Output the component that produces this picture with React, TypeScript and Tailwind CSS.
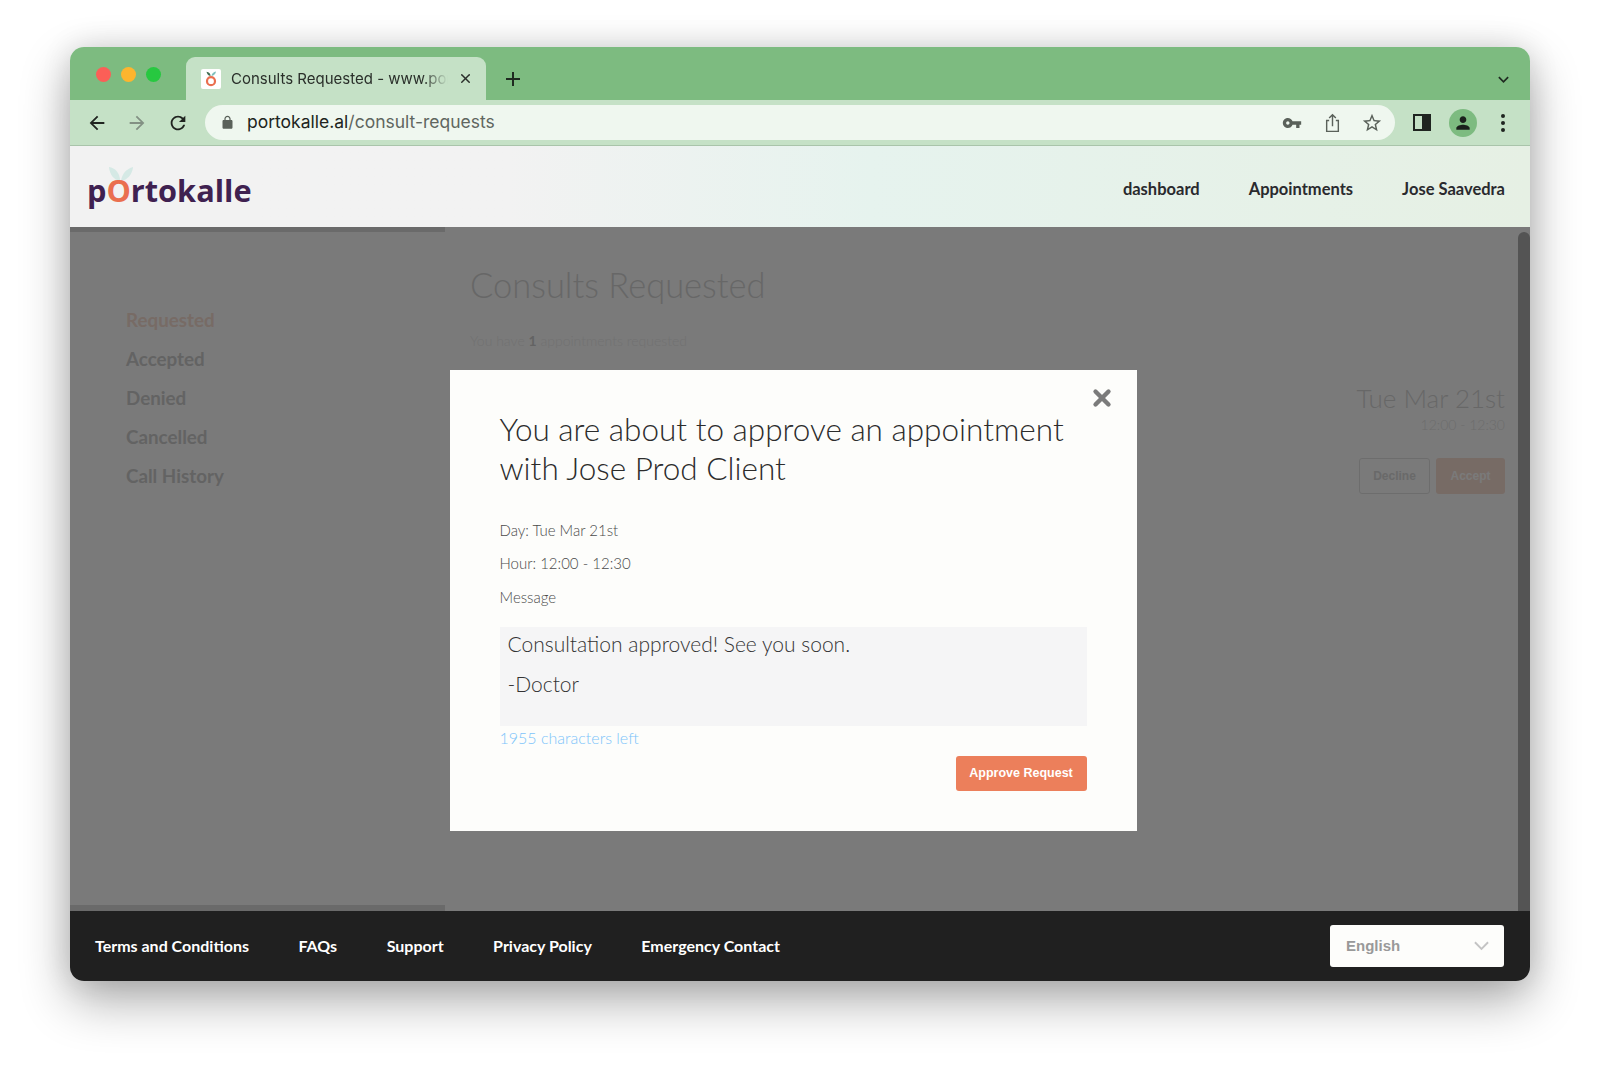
import { X } from "lucide-react";

const raleway = "font-['Lato','Open_Sans',sans-serif]";

function MatIcon({ d, className }: { d: string; className?: string }) {
  return (
    <svg viewBox="0 0 24 24" fill="currentColor" className={className}>
      <path d={d} />
    </svg>
  );
}

function Favicon() {
  return (
    <svg viewBox="0 0 20 20" className="w-[20px] h-[20px] bg-white rounded-[2px]">
      <path d="M9.6 7 C7 6.5 6 5 5.5 2.8 C8 3 9.4 4.6 9.6 7Z" fill="#3f6b4f" />
      <path d="M10.4 7 C10.8 4.5 12.5 3 15 2.6 C14.6 5 13 6.6 10.4 7Z" fill="#7fc0bd" />
      <circle cx="10" cy="12.2" r="4" fill="none" stroke="#ea6f4f" strokeWidth="2.2" />
    </svg>
  );
}

function Logo() {
  return (
    <div className="relative h-[40px] w-[170px] mt-[7px]">
      <svg viewBox="0 0 28 18" className="absolute left-[21px] -top-[5px] w-[26px] h-[17px]">
        <path d="M13 17 C6 16 2 10 1 2 C8 3 13 9 13 17Z" fill="#d5e9e5" />
        <path d="M14 17 C15 9 20 4 27 2 C26 10 21 16 14 17Z" fill="#d5e9e5" />
      </svg>
      <span className="absolute left-0 top-0 font-['Open_Sans',sans-serif] font-bold text-[30.7px] leading-[40px] text-[#3f2150] whitespace-nowrap">
        p<span className="text-[#ea6f4f]">O</span>rtokalle
      </span>
    </div>
  );
}

function BrowserChrome() {
  return (
    <>
      <div className="h-[53px] bg-[#7dbb80] flex items-end pl-[26px] pr-[20px] shrink-0">
        <div className="flex gap-[10px] mb-[18px] mr-[25px] items-center">
          <span className="w-[15px] h-[15px] rounded-full bg-[#fb5f57]" />
          <span className="w-[15px] h-[15px] rounded-full bg-[#fdb52e]" />
          <span className="w-[15px] h-[15px] rounded-full bg-[#27c840]" />
        </div>
        <div className="w-[300px] h-[43px] bg-[#c5e1c6] rounded-t-[9px] flex items-center pl-[15px] pr-[13px] gap-[10px] font-['Inter',sans-serif] text-[15px] text-[#2a2f2a]">
          <Favicon />
          <span className="flex-1 pt-[1px] whitespace-nowrap overflow-hidden [mask-image:linear-gradient(to_right,black_88%,transparent)]">
            Consults Requested - www.portokalle.al
          </span>
          <X size={15} strokeWidth={2.4} />
        </div>
        <svg viewBox="0 0 16 16" className="w-[16px] h-[16px] ml-[19px] mb-[13px] text-[#1f2a20]">
          <path d="M8 1v14M1 8h14" stroke="currentColor" strokeWidth="2" />
        </svg>
        <svg viewBox="0 0 14 14" className="w-[13px] h-[13px] ml-auto mb-[14px] text-[#1f2a20]">
          <path d="M2 4.5l5 5 5-5" fill="none" stroke="currentColor" strokeWidth="1.8" />
        </svg>
      </div>
      <div className="h-[46px] bg-[#c5e1c6] border-b border-[#a9c4aa] flex items-center pl-[16px] pr-[18px] shrink-0">
        <MatIcon d="M20 11H7.83l5.59-5.59L12 4l-8 8 8 8 1.41-1.41L7.83 13H20v-2z" className="w-[22px] h-[22px] text-[#202420]" />
        <MatIcon d="M4 11h12.17l-5.59-5.59L12 4l8 8-8 8-1.41-1.41L16.17 13H4v-2z" className="w-[22px] h-[22px] ml-[18px] text-[#839184]" />
        <MatIcon d="M17.65 6.35C16.2 4.9 14.21 4 12 4c-4.42 0-7.99 3.58-7.99 8s3.57 8 7.99 8c3.73 0 6.84-2.55 7.73-6h-2.08c-.82 2.33-3.04 4-5.65 4-3.31 0-6-2.69-6-6s2.69-6 6-6c1.66 0 3.14.69 4.22 1.78L13 11h7V4l-2.35 2.35z" className="w-[22px] h-[22px] ml-[19px] text-[#202420]" />
        <div className="ml-[16px] w-[1190px] h-[35px] rounded-full bg-[#eff7ef] flex items-center pl-[15px] pr-[12px]">
          <MatIcon d="M18 8h-1V6c0-2.76-2.24-5-5-5S7 3.24 7 6v2H6c-1.1 0-2 .9-2 2v10c0 1.1.9 2 2 2h12c1.1 0 2-.9 2-2V10c0-1.1-.9-2-2-2zM9 6c0-1.66 1.34-3 3-3s3 1.34 3 3v2H9V6z" className="w-[15px] h-[15px] text-[#5a615a]" />
          <span className="ml-[12px] font-['Inter',sans-serif] text-[17.5px] text-[#202420] whitespace-nowrap">
            portokalle.al<span className="text-[#5f665f]">/consult-requests</span>
          </span>
          <MatIcon d="M12.65 10C11.83 7.67 9.61 6 7 6c-3.31 0-6 2.69-6 6s2.69 6 6 6c2.61 0 4.83-1.67 5.65-4H17v4h4v-4h2v-4H12.65zM7 14c-1.1 0-2-.9-2-2s.9-2 2-2 2 .9 2 2-.9 2-2 2z" className="w-[20px] h-[20px] ml-auto text-[#5a615a]" />
          <svg viewBox="0 0 20 24" className="w-[17px] h-[20px] ml-[22px] text-[#5a615a]" fill="none" stroke="currentColor" strokeWidth="1.7">
            <path d="M6 9H3v13h14V9h-3" />
            <path d="M10 16V2M6 6l4-4 4 4" />
          </svg>
          <MatIcon d="M22 9.24l-7.19-.62L12 2 9.19 8.63 2 9.24l5.46 4.73L5.82 21 12 17.27 18.18 21l-1.63-7.03L22 9.24zM12 15.4l-3.76 2.27 1-4.28-3.32-2.88 4.38-.38L12 6.1l1.71 4.04 4.38.38-3.32 2.88 1 4.28L12 15.4z" className="w-[22px] h-[22px] ml-[20px] text-[#5a615a]" />
        </div>
        <div className="ml-[18px] w-[18px] h-[17px] border-[2.5px] border-[#1f2420] flex justify-end">
          <span className="w-[7px] bg-[#1f2420]" />
        </div>
        <div className="ml-[18px] w-[28px] h-[28px] rounded-full bg-[#7dbb80] flex items-center justify-center">
          <MatIcon d="M12 12c2.21 0 4-1.79 4-4s-1.79-4-4-4-4 1.79-4 4 1.79 4 4 4zm0 2c-2.67 0-8 1.34-8 4v2h16v-2c0-2.66-5.33-4-8-4z" className="w-[20px] h-[20px] text-[#1a201b]" />
        </div>
        <div className="ml-[24px] flex flex-col gap-[3px]">
          <span className="w-[4px] h-[4px] rounded-full bg-[#1f2420]" />
          <span className="w-[4px] h-[4px] rounded-full bg-[#1f2420]" />
          <span className="w-[4px] h-[4px] rounded-full bg-[#1f2420]" />
        </div>
      </div>
    </>
  );
}

function Header() {
  return (
    <header className="h-[81px] shrink-0 bg-gradient-to-r from-[#f2f2f2] from-[30%] via-[#e6f3ee] via-[55%] to-[#e6f0e4] flex items-center pl-[17px] pr-[25px]">
      <Logo />
      <nav className={`ml-auto mt-[5px] flex gap-[49px] font-bold text-[16.5px] text-[#2a2a2e] ${raleway}`}>
        <span>dashboard</span>
        <span>Appointments</span>
        <span>Jose Saavedra</span>
      </nav>
    </header>
  );
}

function Background() {
  const items = ["Accepted", "Denied", "Cancelled", "Call History"];
  return (
    <div className={`flex-1 min-w-0 flex flex-col ${raleway}`}>
      <div className="h-[5px] w-[375px] bg-[#dedede] shrink-0" />
      <div className="flex flex-1">
        <aside className="w-[400px] shrink-0 pt-[76px] pl-[56px] flex flex-col gap-[16px] font-bold text-[18.8px] leading-[23px] text-[#d0d0d0]">
          <span className="text-[#f9e0d4]">Requested</span>
          {items.map((item) => (
            <span key={item}>{item}</span>
          ))}
        </aside>
        <section className="flex-1 pt-[31px] pr-[13px]">
          <h1 className="font-light text-[34.5px] leading-[44px] text-[#d8d8d8]">Consults Requested</h1>
          <p className="mt-[24px] text-[14px] leading-[20px] font-light text-[#ededed]">
            You have <b className="font-bold text-[#d0d0d0]">1</b> appointments requested
          </p>
          <div className="mt-[29px] flex flex-col items-end">
            <div className="font-light text-[26px] leading-[36px] text-[#d8d8d8]">Tue Mar 21st</div>
            <div className="text-[14px] font-light leading-[18px] text-[#e4e4e4]">12:00 - 12:30</div>
            <div className="mt-[24px] flex gap-[6px] font-['Liberation_Sans',sans-serif] font-bold text-[12px]">
              <span className="w-[71px] h-[36px] rounded-[3px] border border-[#e4e4e4] flex items-center justify-center text-[#dcdcdc]">Decline</span>
              <span className="w-[69px] h-[36px] rounded-[3px] bg-[#f9dfd4] flex items-center justify-center text-white">Accept</span>
            </div>
          </div>
        </section>
      </div>
      <div className="h-[6px] w-[375px] bg-[#dedede] shrink-0" />
    </div>
  );
}

function ApproveModal() {
  return (
    <div className="absolute inset-0 bg-black/[.52] flex justify-center items-start pt-[143px] pr-[14px]">
      <div className={`relative w-[687px] h-[461px] bg-[#fdfdfb] pt-[40px] px-[50px] ${raleway}`}>
        <button className="absolute right-[22px] top-[15px] text-[#7b7b7b]">
          <X size={26} strokeWidth={4} />
        </button>
        <h2 className="font-light text-[31.5px] leading-[39px] text-[#2c2c2c]">
          You are about to approve an appointment
          <br />
          with Jose Prod Client
        </h2>
        <div className="mt-[32px] flex flex-col gap-[13px] text-[15px] leading-[20px] font-light text-[#4a4a4a]">
          <p>Day: Tue Mar 21st</p>
          <p>Hour: 12:00 - 12:30</p>
          <p className="pt-[1px]">Message</p>
        </div>
        <div className="mt-[20px] h-[99px] bg-[#f5f5f6] px-[8px] text-[21px] leading-[33px] font-light text-[#333]">
          <p>Consultation approved! See you soon.</p>
          <p className="mt-[7px]">-Doctor</p>
        </div>
        <p className="mt-[1px] text-[16px] leading-[22px] font-light text-[#7cc4fa]">1955 characters left</p>
        <div className="mt-[7px] flex justify-end">
          <button className="w-[131px] h-[35px] rounded-[3px] bg-[#ec7f5b] text-white font-['Liberation_Sans',sans-serif] font-bold text-[12.5px]">
            Approve Request
          </button>
        </div>
      </div>
    </div>
  );
}

function Footer() {
  const links = ["Terms and Conditions", "FAQs", "Support", "Privacy Policy", "Emergency Contact"];
  return (
    <footer className="h-[70px] shrink-0 bg-[#202020] flex items-center pl-[25px] pr-[26px]">
      <div className={`flex gap-[49.5px] font-bold text-[16px] text-white ${raleway}`}>
        {links.map((link) => (
          <span key={link}>{link}</span>
        ))}
      </div>
      <div className="ml-auto w-[174px] h-[42px] rounded-[3px] bg-[#fdfdfb] flex items-center pl-[16px] pr-[15px] font-['Liberation_Sans',sans-serif] font-bold text-[15px] text-[#999]">
        English
        <svg viewBox="0 0 16 10" className="w-[15px] h-[10px] ml-auto text-[#c4c4c4]">
          <path d="M1 1l7 7 7-7" fill="none" stroke="currentColor" strokeWidth="2" />
        </svg>
      </div>
    </footer>
  );
}

export default function App() {
  return (
    <div className="w-[1600px] h-[1074px] bg-white pt-[47px] pl-[70px] overflow-hidden">
      <div className="w-[1460px] h-[934px] rounded-[14px] overflow-hidden flex flex-col shadow-[0_20px_50px_rgba(0,0,0,0.32),0_0_30px_rgba(0,0,0,0.12)]">
        <BrowserChrome />
        <Header />
        <main className="relative flex-1 flex bg-white">
          <Background />
          <div className="w-[12px] shrink-0 bg-[#b0b0b0] rounded-t-[6px] mt-[5px]" />
          <ApproveModal />
        </main>
        <Footer />
      </div>
    </div>
  );
}
